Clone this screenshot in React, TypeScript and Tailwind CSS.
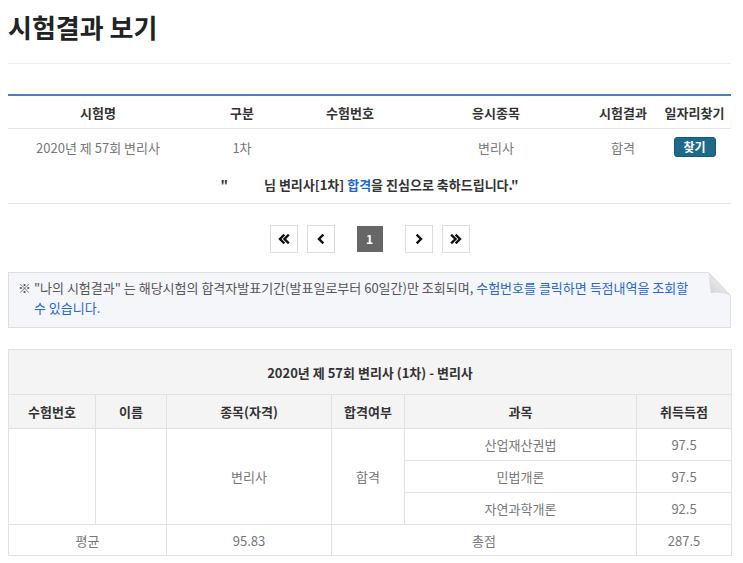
import React from "react";

const cols = "grid grid-cols-[180px_108px_108px_184px_70px_73px]";

function Chev({ dir, double }: { dir: "l" | "r"; double?: boolean }) {
  const l = dir === "l";
  return (
    <svg width="12" height="12" viewBox="0 0 12 12" fill="none" stroke="#111" strokeWidth="2.4" strokeLinecap="square" strokeLinejoin="miter">
      {double ? (
        l ? (
          <>
            <polyline points="5.5,2.5 2,6 5.5,9.5" />
            <polyline points="10,2.5 6.5,6 10,9.5" />
          </>
        ) : (
          <>
            <polyline points="2,2.5 5.5,6 2,9.5" />
            <polyline points="6.5,2.5 10,6 6.5,9.5" />
          </>
        )
      ) : l ? (
        <polyline points="7.5,2.5 4,6 7.5,9.5" />
      ) : (
        <polyline points="4.5,2.5 8,6 4.5,9.5" />
      )}
    </svg>
  );
}

function PageBtn({ children }: { children: React.ReactNode }) {
  return (
    <div className="w-[28px] h-[28px] border border-[#dddddd] bg-white flex items-center justify-center">
      {children}
    </div>
  );
}

export default function App() {
  return (
    <div className="w-[743px] min-h-[563px] bg-white pl-2 pr-3 font-['Noto_Sans_CJK_KR','Noto_Sans',sans-serif] text-[#333]">
      <h1 className="pt-[9px] text-[26px] leading-[36px] font-bold text-[#222]">시험결과 보기</h1>
      <div className="mt-[18px] h-px bg-[#eeeeee]" />

      <div className="mt-[30px] border-t-2 border-[#4a80c2]">
        <div className={`${cols} h-[33px] items-center border-b border-[#e6e6e6] text-[13px] leading-none font-bold text-[#333] text-center`}>
          <div>시험명</div>
          <div>구분</div>
          <div>수험번호</div>
          <div>응시종목</div>
          <div>시험결과</div>
          <div>일자리찾기</div>
        </div>
        <div className={`${cols} h-[36px] items-center text-[13px] leading-none text-[#777] text-center`}>
          <div>2020년 제 57회 변리사</div>
          <div>1차</div>
          <div></div>
          <div>변리사</div>
          <div>합격</div>
          <div className="flex justify-center">
            <div className="w-[42px] h-[20px] rounded-[3px] bg-[#1c6b8e] border border-[#15597a] text-white font-bold text-[12px] leading-none flex items-center justify-center">
              찾기
            </div>
          </div>
        </div>
        <div className="h-[39px] flex items-center justify-center border-b border-[#e6e6e6] text-[13px] leading-none font-bold text-[#333]">
          <span>"</span>
          <span className="inline-block w-[36px]" />
          <span>
            님 변리사[1차] <span className="text-[#2266d6]">합격</span>을 진심으로 축하드립니다."
          </span>
        </div>
      </div>

      <div className="mt-[21px] flex justify-center items-center">
        <PageBtn>
          <Chev dir="l" double />
        </PageBtn>
        <div className="ml-[9px]">
          <PageBtn>
            <Chev dir="l" />
          </PageBtn>
        </div>
        <div className="ml-[22px] w-[26px] h-[26px] bg-[#666666] text-white font-bold text-[12px] leading-none flex items-center justify-center">
          1
        </div>
        <div className="ml-[22px]">
          <PageBtn>
            <Chev dir="r" />
          </PageBtn>
        </div>
        <div className="ml-[9px]">
          <PageBtn>
            <Chev dir="r" double />
          </PageBtn>
        </div>
      </div>

      <div className="relative mt-[19px] border border-[#dedede] bg-[#f5f6fa] pt-[5px] pb-[9px] pl-[25px] pr-[30px] text-[13px] leading-[20px] text-[#555]">
        <p className="-indent-4">
          <span className="whitespace-nowrap">
            ※ "나의 시험결과" 는 해당시험의 합격자발표기간(발표일로부터 60일간)만 조회되며,{" "}
            <span className="text-[#2266d6]">수험번호를 클릭하면 득점내역을 조회할</span>
          </span>
          <br />
          <span className="text-[#2266d6]">수 있습니다.</span>
        </p>
        <svg className="absolute top-[-1px] right-[-1px]" width="23" height="24" viewBox="0 0 23 24">
          <defs>
            <linearGradient id="fold" x1="0" y1="1" x2="1" y2="0">
              <stop offset="0" stopColor="#cfcfcf" />
              <stop offset="0.5" stopColor="#e6e6e6" />
              <stop offset="1" stopColor="#f4f4f4" />
            </linearGradient>
          </defs>
          <polygon points="0,0 23,0 23,24" fill="#ffffff" />
          <path d="M0.5 0.5 Q1.5 13 3 21 Q12 19.5 22.5 23.5 Z" fill="url(#fold)" />
          <path d="M0.5 0.5 L22.5 23.5" stroke="#d6d6d6" strokeWidth="1" fill="none" />
          <path d="M22.5 23.5 L22.5 24" stroke="#dedede" strokeWidth="1" />
        </svg>
      </div>

      <table className="mt-[21px] w-[723px] table-fixed border-collapse border border-[#e2e2e2] text-[13px] leading-none text-center">
        <colgroup>
          <col className="w-[87px]" />
          <col className="w-[71px]" />
          <col className="w-[165px]" />
          <col className="w-[73px]" />
          <col className="w-[232px]" />
          <col className="w-[95px]" />
        </colgroup>
        <thead>
          <tr className="bg-[#f4f4f4]">
            <th colSpan={6} className="h-[45px] border border-[#e2e2e2] font-bold text-[#333]">
              2020년 제 57회 변리사 (1차) - 변리사
            </th>
          </tr>
          <tr className="bg-[#f4f4f4] font-bold text-[#333]">
            <th className="h-[34px] border border-[#e2e2e2]">수험번호</th>
            <th className="border border-[#e2e2e2]">이름</th>
            <th className="border border-[#e2e2e2]">종목(자격)</th>
            <th className="border border-[#e2e2e2]">합격여부</th>
            <th className="border border-[#e2e2e2]">과목</th>
            <th className="border border-[#e2e2e2]">취득득점</th>
          </tr>
        </thead>
        <tbody className="text-[#777]">
          <tr>
            <td rowSpan={3} className="border border-[#e2e2e2]"></td>
            <td rowSpan={3} className="border border-[#e2e2e2]"></td>
            <td rowSpan={3} className="border border-[#e2e2e2]">변리사</td>
            <td rowSpan={3} className="border border-[#e2e2e2]">합격</td>
            <td className="h-[32px] border border-[#e2e2e2]">산업재산권법</td>
            <td className="border border-[#e2e2e2]">97.5</td>
          </tr>
          <tr>
            <td className="h-[32px] border border-[#e2e2e2]">민법개론</td>
            <td className="border border-[#e2e2e2]">97.5</td>
          </tr>
          <tr>
            <td className="h-[32px] border border-[#e2e2e2]">자연과학개론</td>
            <td className="border border-[#e2e2e2]">92.5</td>
          </tr>
          <tr>
            <td colSpan={2} className="h-[31px] border border-[#e2e2e2]">평균</td>
            <td className="border border-[#e2e2e2]">95.83</td>
            <td colSpan={2} className="border border-[#e2e2e2]">총점</td>
            <td className="border border-[#e2e2e2]">287.5</td>
          </tr>
        </tbody>
      </table>
    </div>
  );
}
